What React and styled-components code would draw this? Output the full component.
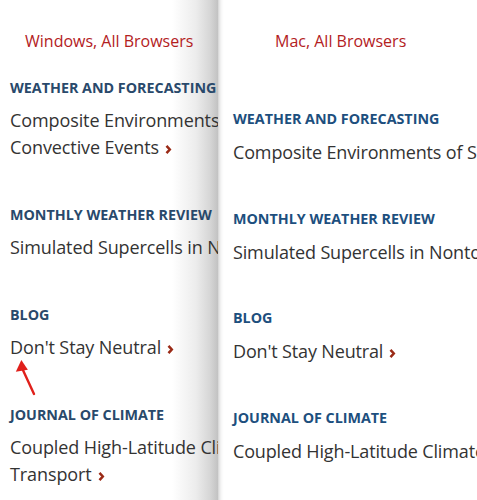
import React from "react";
import styled, { createGlobalStyle } from "styled-components";

const Global = createGlobalStyle`
  html, body {
    margin: 0;
    padding: 0;
    background: #ffffff;
  }
  body {
    font-family: "Open Sans", "Noto Sans", sans-serif;
  }
`;

let Page = styled.div`
  display: flex;
  width: 477px;
  height: 500px;
  overflow: hidden;
  background: #fff;
`;

let Panel = styled.section`
  position: relative;
  flex: ${(p) => (p.mac ? "1" : "0 0 218px")};
  padding: 31px 0 0 ${(p) => (p.mac ? "15px" : "10px")};
  overflow: hidden;
  box-sizing: border-box;
  background: ${(p) =>
    p.mac
      ? "linear-gradient(90deg, #d4d4d4 0px, #ededed 2px, #fafafa 4px, #fff 6px)"
      : "linear-gradient(90deg, #fff 0px, #fff 172px, #ececec 196px, #d6d6d6 210px, #c2c2c2 218px)"};
`;

let Label = styled.div`
  color: #b3211e;
  font-size: 16px;
  line-height: 20px;
  margin-left: ${(p) => (p.mac ? "42px" : "15px")};
  white-space: nowrap;
  margin-bottom: ${(p) => (p.mac ? "58px" : "27px")};
`;

let Entry = styled.div`
  position: relative;
  margin-top: ${(p) => (p.first ? "0" : p.mac ? "42.5px" : "44px")};
`;

let Heading = styled.h3`
  margin: 0;
  font-size: 14.3px;
  line-height: 20px;
  font-weight: 700;
  color: ${(p) => (p.mac ? "#1d4f7e" : "#29496b")};
  white-space: nowrap;
`;

let Body = styled.div`
  margin-top: 9px;
  font-size: 18px;
  line-height: ${(p) => (p.mac ? "28px" : "27px")};
  color: #333;
  letter-spacing: ${(p) => (p.mac ? "-0.15px" : "-0.1px")};
`;

let Line = styled.div`
  white-space: nowrap;
`;

let More = styled.svg`
  margin-left: 6px;
  vertical-align: -1px;
`;

let Pointer = styled.svg`
  position: absolute;
  left: 14px;
  top: 358px;
`;

const Chevron = () => (
  <More width="7" height="11" viewBox="0 0 7 11">
    <polyline
      points="1.5,1.8 4.8,5.5 1.5,9.2"
      fill="none"
      stroke="#9a2a16"
      strokeWidth="2.5"
    />
  </More>
);

const entries = [
  {
    journal: "WEATHER AND FORECASTING",
    lines: ["Composite Environments of Severe", "Convective Events"],
  },
  {
    journal: "MONTHLY WEATHER REVIEW",
    lines: ["Simulated Supercells in Nontornadic and Tornadic"],
  },
  { journal: "BLOG", lines: ["Don't Stay Neutral"] },
  {
    journal: "JOURNAL OF CLIMATE",
    lines: ["Coupled High-Latitude Climate Feedbacks and Their", "Transport"],
  },
];

const Column = ({ mac, label }) => (
  <Panel mac={mac}>
    <Label mac={mac}>{label}</Label>
    {entries.map((e, i) => {
      const lines = mac ? [e.lines.join(" ")] : e.lines;
      return (
        <Entry mac={mac} first={i === 0} key={i}>
          <Heading mac={mac}>{e.journal}</Heading>
          <Body mac={mac}>
            {lines.map((l, j) => (
              <Line key={j}>
                {l}
                {j === lines.length - 1 && <Chevron />}
              </Line>
            ))}
          </Body>
        </Entry>
      );
    })}
    {!mac && (
      <Pointer width="24" height="40" viewBox="0 0 24 40">
        <line x1="20" y1="36" x2="8" y2="10" stroke="#e0201b" strokeWidth="2.4" strokeLinecap="round" />
        <polygon points="4,3 14,9 4,16" fill="#e0201b" transform="rotate(25 8 10)" />
      </Pointer>
    )}
  </Panel>
);

export default function App() {
  return (
    <Page>
      <Global />
      <Column label="Windows, All Browsers" />
      <Column mac label="Mac, All Browsers" />
    </Page>
  );
}
